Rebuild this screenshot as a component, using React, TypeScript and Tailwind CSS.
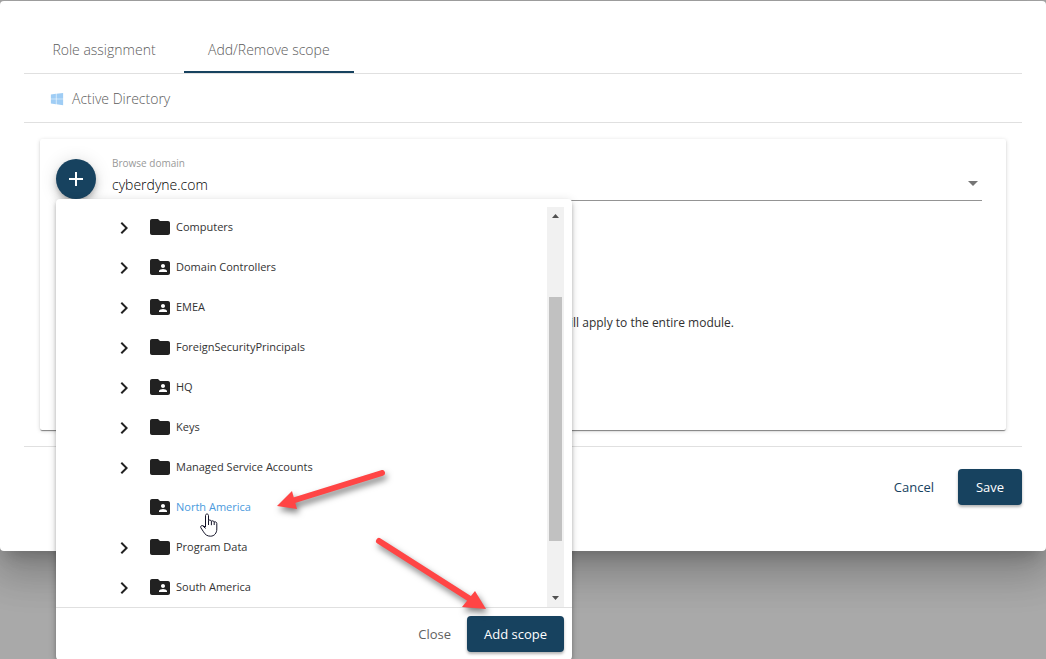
import React, { useState } from 'react';
import { FaWindows } from 'react-icons/fa';

type NodeKind = 'folder' | 'unit';

interface TreeNode {
  name: string;
  kind: NodeKind;
  leaf?: boolean;
}

const TABS = ['Role assignment', 'Add/Remove scope'];

const NODES: TreeNode[] = [
  { name: 'Computers', kind: 'folder' },
  { name: 'Domain Controllers', kind: 'unit' },
  { name: 'EMEA', kind: 'unit' },
  { name: 'ForeignSecurityPrincipals', kind: 'folder' },
  { name: 'HQ', kind: 'unit' },
  { name: 'Keys', kind: 'folder' },
  { name: 'Managed Service Accounts', kind: 'folder' },
  { name: 'North America', kind: 'unit', leaf: true },
  { name: 'Program Data', kind: 'folder' },
  { name: 'South America', kind: 'unit' },
];

// Material icon paths, 24x24 grid
const ICON_PATHS = {
  folder: 'M10 4H4c-1.1 0-1.99.9-1.99 2L2 18c0 1.1.9 2 2 2h16c1.1 0 2-.9 2-2V8c0-1.1-.9-2-2-2h-8l-2-2z',
  unit: 'M20 6h-8l-2-2H4c-1.1 0-1.99.9-1.99 2L2 18c0 1.1.9 2 2 2h16c1.1 0 2-.9 2-2V8c0-1.1-.9-2-2-2zm-5 3c1.1 0 2 .9 2 2s-.9 2-2 2-2-.9-2-2 .9-2 2-2zm4 8h-8v-1c0-1.33 2.67-2 4-2s4 .67 4 2v1z',
  chevron: 'M8.59 16.58L13.17 12 8.59 7.41 10 6l6 6-6 6z',
  plus: 'M19 13h-6v6h-2v-6H5v-2h6V5h2v6h6v2z',
};

function Icon({ name }: { name: keyof typeof ICON_PATHS }) {
  return (
    <svg viewBox="0 0 24 24" className="h-6 w-6 shrink-0 fill-current" aria-hidden="true">
      <path d={ICON_PATHS[name]} />
    </svg>
  );
}

function HandCursor() {
  return (
    <svg viewBox="0 0 20 24" className="pointer-events-none absolute top-6.5 left-24 z-10 h-6 w-5" aria-hidden="true">
      <path
        d="M5.5 14V2.5c0-2 3-2 3 0v5c.5-.8 2.5-.6 2.9.7.6-.7 2.5-.4 2.8.8.6-.5 2.6-.2 2.6 1.5v5.5c0 4-2.4 7.2-6.3 7.2-3.2 0-5.400-1.500-7-4.400L.8 14.700c-.6-1.200.5-2.500 1.900-2z"
        fill="#fff"
        stroke="#15152a"
        strokeWidth="1"
        strokeLinejoin="round"
      />
      <path d="M2.7 12.7L5.500 15.500M8.500 7.500v4.500M11.400 8.200v4M14.200 9v3" stroke="#15152a" strokeWidth="1" fill="none" />
    </svg>
  );
}

// Red callout arrows drawn over the tree
function Callouts() {
  return (
    <svg
      viewBox="0 0 516 460"
      className="pointer-events-none absolute top-0 left-0 h-[460px] w-[516px] drop-shadow-[2px_4px_3px_rgba(0,0,0,0.5)]"
      aria-hidden="true"
    >
      <g stroke="#ff4545" strokeWidth="6" strokeLinecap="round">
        <path d="M326 274L239 301" />
        <path d="M323 342L414 400" />
      </g>
      <g fill="#ff4545">
        <path d="M221 307l15-15 5 18z" />
        <path d="M430 410l-11-18-13 16z" />
      </g>
    </svg>
  );
}

function ScopePicker() {
  const [selected, setSelected] = useState('North America');

  return (
    <div className="absolute top-full left-0 z-10 w-[516px] rounded bg-white shadow-[0_2px_4px_-1px_rgba(0,0,0,0.2),0_4px_5px_rgba(0,0,0,0.14),0_1px_10px_rgba(0,0,0,0.12)]">
      <div className="flex pt-2 pr-2">
        <ul className="flex-1 pl-12">
          {NODES.map(node => (
            <li key={node.name} className="relative flex h-10 items-center text-[#212121]">
              <div className="mr-1 w-10">
                {!node.leaf && (
                  <button className="flex h-10 w-10 items-center justify-center pt-0.5" aria-label={`Expand ${node.name}`}>
                    <Icon name="chevron" />
                  </button>
                )}
              </div>
              <button
                onClick={() => setSelected(node.name)}
                className="flex items-center gap-1 text-[11px]"
              >
                <Icon name={node.kind} />
                <span className={node.name === selected ? 'text-[#4a9add]' : 'text-[#333]'}>{node.name}</span>
              </button>
              {node.leaf && <HandCursor />}
            </li>
          ))}
        </ul>
        <div className="flex w-[17px] flex-col items-center bg-[#f1f1f1]" aria-hidden="true">
          <svg viewBox="0 0 17 17" className="h-[17px] w-[17px] fill-[#505050]"><path d="M5 11l3.5-4 3.5 4z" /></svg>
          <div className="mt-[73px] h-[244px] w-[13px] bg-[#c1c1c1]" />
          <svg viewBox="0 0 17 17" className="mt-auto h-[17px] w-[17px] fill-[#505050]"><path d="M5 6l3.5 4L12 6z" /></svg>
        </div>
      </div>
      <div className="flex justify-end border-t border-[#e0e0e0] p-2 text-[13px]">
        <button className="h-9 px-4 pt-0.5 text-[#616161]">Close</button>
        <button className="h-9 rounded bg-[#17425f] px-[17px] pt-0.5 font-medium text-white shadow-[0_2px_3px_rgba(0,0,0,0.3)]">
          Add scope
        </button>
      </div>
      <Callouts />
    </div>
  );
}

export default function App() {
  const [tab, setTab] = useState(TABS[1]);
  const [domain, setDomain] = useState('cyberdyne.com');

  return (
    <div className="h-screen overflow-hidden bg-[#a9a9a9] pt-px font-['Open_Sans',sans-serif]">
      <div
        role="dialog"
        aria-label="Edit assignment"
        className="rounded bg-white px-6 pt-6 pb-[46px] shadow-[0_11px_15px_-7px_rgba(0,0,0,0.2),0_24px_38px_3px_rgba(0,0,0,0.14),0_9px_46px_8px_rgba(0,0,0,0.12)]"
      >
        {/* Tabs */}
        <div role="tablist" className="flex h-[49px] border-b border-[#e0e0e0]">
          {TABS.map(name => (
            <button
              key={name}
              role="tab"
              aria-selected={name === tab}
              onClick={() => setTab(name)}
              className={`min-w-40 border-b-2 px-6 pt-1 text-sm font-light text-[#5c5c5c] ${
                name === tab ? 'border-[#17425f]' : 'border-transparent'
              }`}
            >
              {name}
            </button>
          ))}
        </div>

        {/* Module */}
        <div className="flex h-[49px] items-center gap-2 border-b border-[#e0e0e0] px-[26px] pt-0.5 text-sm font-light text-[#5c5c5c]">
          <FaWindows size={14} className="text-[#9fcdf5]" />
          <span>Active Directory</span>
        </div>

        {/* Scope card */}
        <div className="m-4 h-[291px] rounded-xs bg-white px-4 pt-5 shadow-[0_2px_1px_-1px_rgba(0,0,0,0.3),0_1px_1px_rgba(0,0,0,0.2),0_1px_4px_rgba(0,0,0,0.16)]">
          <div className="relative flex h-10 items-start gap-4 pr-2">
            <button
              aria-label="Add scope"
              className="flex h-10 w-10 items-center justify-center rounded-full bg-[#17425f] text-white shadow-[0_3px_5px_-1px_rgba(0,0,0,0.2),0_6px_10px_rgba(0,0,0,0.14),0_1px_18px_rgba(0,0,0,0.12)]"
            >
              <Icon name="plus" />
            </button>
            <div className="relative -mt-1 flex-1 border-b border-[#949494] pb-px">
              <label htmlFor="domain" className="block text-[10px] leading-4 text-[#999]">Browse domain</label>
              <select
                id="domain"
                value={domain}
                onChange={e => setDomain(e.target.value)}
                className="block h-7 w-full appearance-none bg-transparent text-sm font-light text-black outline-none"
              >
                <option>cyberdyne.com</option>
              </select>
              <svg viewBox="0 0 10 5" className="pointer-events-none absolute right-1 bottom-3.5 h-[5px] w-[10px] fill-[#757575]">
                <path d="M0 0h10L5 5z" />
              </svg>
            </div>
            <ScopePicker />
          </div>
          <p className="mt-29 pr-64 text-right text-xs text-[#303030]">will apply to the entire module.</p>
        </div>

        {/* Actions */}
        <div className="flex justify-end gap-2 border-t border-[#e0e0e0] pt-[22px] text-[13px] text-[#17425f]">
          <button className="h-9 px-4 pt-0.5">Cancel</button>
          <button className="h-9 min-w-16 rounded bg-[#17425f] px-[17px] pt-0.5 font-medium text-white shadow-[0_2px_3px_rgba(0,0,0,0.3)]">
            Save
          </button>
        </div>
      </div>
    </div>
  );
}
